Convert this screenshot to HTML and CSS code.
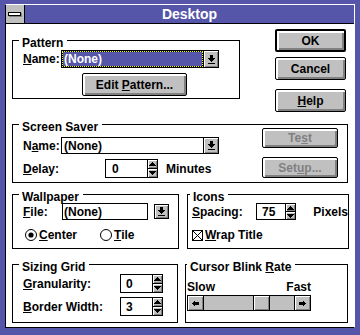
FILE: index.html
```html
<!DOCTYPE html>
<html lang="en">
<head>
  <meta charset="UTF-8">
  <title>Desktop</title>
  <meta name="viewport" content="width=device-width, initial-scale=1.0">
  <link rel="stylesheet" href="styles.css">
</head>
<body>
  <svg class="defs" width="0" height="0">
    <symbol id="drop" viewBox="0 0 7 9"><path d="M2 0h3v3H2zM0 3h7v1H0zM1 4h5v1H1zM2 5h3v1H2zM3 6h1v1H3zM0 8h7v1H0z"/></symbol>
    <symbol id="up" viewBox="0 0 7 4"><path d="M3 0h1v1H3zM2 1h3v1H2zM1 2h5v1H1zM0 3h7v1H0z"/></symbol>
    <symbol id="down" viewBox="0 0 7 4"><path d="M0 0h7v1H0zM1 1h5v1H1zM2 2h3v1H2zM3 3h1v1H3z"/></symbol>
    <symbol id="left" viewBox="0 0 7 7"><path d="M0 3h1v1H0zM1 2h1v3H1zM2 1h1v5H2zM3 2h4v3H3z"/></symbol>
    <symbol id="right" viewBox="0 0 7 7"><path d="M6 3h1v1H6zM5 2h1v3H5zM4 1h1v5H4zM0 2h4v3H0z"/></symbol>
  </svg>

  <div class="window">
    <div class="titlebar">
      <div class="sysmenu"><span class="sysbar"></span></div>
      <div class="caption">Desktop</div>
    </div>

    <div class="dialog">
      <div class="row">
        <div class="group pattern">
          <div class="legend">Pattern</div>
          <div class="line first">
            <span class="label name"><u>N</u>ame:</span>
            <div class="combo focus">
              <div class="field"><span class="sel">(None)</span></div>
              <div class="dropbtn"><svg width="7" height="9"><use href="#drop"/></svg></div>
            </div>
          </div>
          <div class="btn edit"><span>Edit <u>P</u>attern...</span></div>
        </div>

        <div class="buttons">
          <div class="btn default"><span>OK</span></div>
          <div class="btn cancel"><span>Cancel</span></div>
          <div class="btn help"><span><u>H</u>elp</span></div>
        </div>
      </div>

      <div class="group saver">
        <div class="legend">Screen Saver</div>
        <div class="row">
          <div class="saver-left">
            <div class="line">
              <span class="label name">N<u>a</u>me:</span>
              <div class="combo">
                <div class="field">(None)</div>
                <div class="dropbtn"><svg width="7" height="9"><use href="#drop"/></svg></div>
              </div>
            </div>
            <div class="line delay">
              <span class="label delay-label"><u>D</u>elay:</span>
              <div class="spin delay-spin">
                <div class="value">0</div>
                <div class="arrows">
                  <span><svg width="7" height="4"><use href="#up"/></svg></span>
                  <span><svg width="7" height="4"><use href="#down"/></svg></span>
                </div>
              </div>
              <span class="unit minutes">Minutes</span>
            </div>
          </div>
          <div class="saver-right">
            <div class="btn off test"><span>Te<u>s</u>t</span></div>
            <div class="btn off setup"><span>Set<u>u</u>p...</span></div>
          </div>
        </div>
      </div>

      <div class="row middle">
        <div class="group wallpaper">
          <div class="legend">Wallpaper</div>
          <div class="line first">
            <span class="label file"><u>F</u>ile:</span>
            <div class="box">(None)</div>
            <div class="dropbtn alone"><svg width="7" height="9"><use href="#drop"/></svg></div>
          </div>
          <div class="line radios">
            <div class="radio on">
              <svg width="12" height="12" viewBox="0 0 12 12"><circle cx="6" cy="6" r="5.5" fill="#fff" stroke="#000"/><circle cx="6" cy="6" r="2.6"/></svg>
              <span><u>C</u>enter</span>
            </div>
            <div class="radio">
              <svg width="12" height="12" viewBox="0 0 12 12"><circle cx="6" cy="6" r="5.5" fill="#fff" stroke="#000"/></svg>
              <span><u>T</u>ile</span>
            </div>
          </div>
        </div>

        <div class="group icons">
          <div class="legend">Icons</div>
          <div class="line first">
            <span class="label spacing"><u>S</u>pacing:</span>
            <div class="spin spacing-spin">
              <div class="value">75</div>
              <div class="arrows">
                <span><svg width="7" height="4"><use href="#up"/></svg></span>
                <span><svg width="7" height="4"><use href="#down"/></svg></span>
              </div>
            </div>
            <span class="unit pixels">Pixels</span>
          </div>
          <div class="line check">
            <svg width="11" height="11" viewBox="0 0 11 11"><rect x=".5" y=".5" width="10" height="10" fill="#fff" stroke="#000"/><path d="M1 1l9 9M10 1l-9 9" stroke="#000"/></svg>
            <span><u>W</u>rap Title</span>
          </div>
        </div>
      </div>

      <div class="row bottom">
        <div class="group sizing">
          <div class="legend">Sizing Grid</div>
          <div class="line first">
            <span class="label grid"><u>G</u>ranularity:</span>
            <div class="spin grid-spin">
              <div class="value">0</div>
              <div class="arrows">
                <span><svg width="7" height="4"><use href="#up"/></svg></span>
                <span><svg width="7" height="4"><use href="#down"/></svg></span>
              </div>
            </div>
          </div>
          <div class="line border-row">
            <span class="label grid"><u>B</u>order Width:</span>
            <div class="spin grid-spin">
              <div class="value">3</div>
              <div class="arrows">
                <span><svg width="7" height="4"><use href="#up"/></svg></span>
                <span><svg width="7" height="4"><use href="#down"/></svg></span>
              </div>
            </div>
          </div>
        </div>

        <div class="group cursor">
          <div class="legend">Cursor Blink <u>R</u>ate</div>
          <div class="scale"><span>Slow</span><span>Fast</span></div>
          <div class="scroll">
            <div class="arrow left"><svg width="7" height="7"><use href="#left"/></svg></div>
            <div class="track"><div class="thumb"></div></div>
            <div class="arrow right"><svg width="7" height="7"><use href="#right"/></svg></div>
          </div>
        </div>
      </div>
    </div>
  </div>
</body>
</html>
```

FILE: styles.css
```css
body {
  margin: 0;
  background: #5555aa;
  color: #000;
  font: bold 12px "Liberation Sans", Arial, sans-serif;
}
u {
  text-underline-offset: 1px;
}
.defs {
  display: block;
}
.window {
  width: 348px;
  height: 322px;
  margin: 4px 0 0 5px;
  background: #fff;
  border: 1px solid #fff;
  border-left-color: #000;
  border-bottom-color: #000;
}
.titlebar {
  display: flex;
  height: 18px;
  background: #5555aa;
  border-bottom: 1px solid #000;
}
.sysmenu {
  width: 18px;
  background: #c0c0c0;
  border-right: 1px solid #000;
}
.sysbar {
  display: block;
  width: 11px;
  height: 2px;
  margin: 7px 0 0 2px;
  background: #fff;
  border: 1px solid #000;
  box-shadow: 1px 1px 0 #808080;
}
.caption {
  flex: 1;
  color: #fff;
  font-size: 14px;
  line-height: 18px;
  text-align: center;
}
.dialog {
  height: 303px;
  padding: 5px 0 0 6px;
  box-sizing: border-box;
}
.row {
  display: flex;
  align-items: flex-start;
}
.line {
  display: flex;
  align-items: center;
}

/* group boxes */
.group {
  border: 1px solid #000;
  box-sizing: border-box;
  padding-left: 10px;
}
.legend {
  width: fit-content;
  height: 14px;
  line-height: 14px;
  margin: -5px 0 -9px -4px;
  padding: 0 4px 0 3px;
  background: #fff;
}
.pattern {
  width: 228px;
  height: 59px;
  margin-top: 11px;
}
.pattern .line.first {
  margin-top: 9px;
}
.saver {
  width: 336px;
  height: 59px;
  margin-top: 12px;
}
.saver-left {
  padding-top: 12px;
}
.saver-right {
  margin-left: 43px;
  padding-top: 3px;
}
.middle {
  margin-top: 11px;
}
.wallpaper {
  width: 167px;
  height: 55px;
}
.wallpaper .line.first,
.icons .line.first {
  margin-top: 8px;
}
.icons {
  width: 162px;
  height: 55px;
  margin-left: 8px;
  padding-left: 4px;
}
.icons .legend {
  margin-left: -2px;
}
.bottom {
  margin-top: 15px;
}
.sizing {
  width: 166px;
  height: 59px;
}
.sizing .line.first {
  margin-top: 9px;
}
.cursor {
  width: 163px;
  height: 59px;
  margin-left: 7px;
  padding-left: 1px;
}
.cursor .legend {
  margin-left: 0;
}

/* labels */
.label.name { width: 38px; }
.label.delay-label { width: 82px; }
.label.file { width: 39px; }
.label.spacing { width: 67px; }
.label.grid { width: 97px; }
.line.delay { margin-top: 5px; }
.line.border-row { margin-top: 4px; }
.unit.minutes { margin-left: 8px; }
.unit.pixels { margin-left: 17px; }

/* push buttons */
.btn {
  display: flex;
  align-items: center;
  justify-content: center;
  box-sizing: border-box;
  background: #c0c0c0;
  border: 1px solid #000;
  border-radius: 2px;
  box-shadow: inset 2px 2px #fff, inset -2px -2px #808080;
}
.btn.default {
  border-width: 2px;
}
.btn.off {
  color: #808080;
}
.buttons {
  width: 71px;
  margin-left: 35px;
}
.buttons .btn {
  height: 23px;
}
.btn.cancel { margin-top: 5px; }
.btn.help { margin-top: 9px; }
.btn.edit {
  width: 105px;
  height: 23px;
  margin: 5px 0 0 59px;
}
.btn.test,
.btn.setup {
  width: 76px;
}
.btn.test { height: 20px; }
.btn.setup {
  height: 21px;
  margin-top: 9px;
}

/* drop down combos */
.combo {
  display: flex;
  width: 158px;
  height: 18px;
  border: 1px solid #000;
  box-sizing: border-box;
}
.saver .combo {
  height: 17px;
}
.combo .field {
  flex: 1;
  display: flex;
  align-items: center;
  padding-left: 2px;
}
.combo.focus .field {
  padding: 0;
  align-items: stretch;
}
.sel {
  flex: 1;
  display: flex;
  align-items: center;
  padding-left: 1px;
  color: #fff;
  border: 1px dotted #ffff00;
  background: linear-gradient(#5555aa, #5555aa) padding-box, #000;
}
.dropbtn {
  display: flex;
  align-items: center;
  justify-content: center;
  width: 14px;
  background: #c0c0c0;
  border-left: 1px solid #000;
  box-shadow: inset 1px 1px #fff, inset -1px -1px #808080;
}
.dropbtn.alone {
  width: 15px;
  height: 15px;
  margin-left: 6px;
  border: 1px solid #000;
  box-sizing: border-box;
}
.box {
  display: flex;
  align-items: center;
  width: 86px;
  height: 17px;
  padding-left: 1px;
  border: 1px solid #000;
  box-sizing: border-box;
}

/* spin controls */
.spin {
  display: flex;
  border: 1px solid #000;
  box-sizing: border-box;
}
.spin .value {
  flex: 1;
  display: flex;
  align-items: center;
  padding-left: 6px;
}
.arrows {
  display: flex;
  flex-direction: column;
  width: 9px;
  border-left: 1px solid #000;
}
.arrows span {
  flex: 1;
  display: flex;
  align-items: center;
  justify-content: center;
  background: #c0c0c0;
  box-shadow: inset 1px 1px #fff, inset -1px -1px #808080;
}
.arrows span + span {
  border-top: 1px solid #000;
}
.delay-spin {
  width: 53px;
  height: 19px;
}
.spacing-spin {
  width: 42px;
  height: 17px;
}
.spacing-spin .value {
  padding-left: 5px;
}
.grid-spin {
  width: 43px;
  height: 19px;
}
.grid-spin .value {
  padding-left: 5px;
}

/* radio and check */
.line.radios {
  margin-top: 8px;
}
.radio {
  display: flex;
  align-items: center;
  gap: 2px;
}
.radio.on {
  width: 75px;
  margin-left: 2px;
}
.line.check {
  margin-top: 8px;
  gap: 2px;
}

/* slider */
.scale {
  display: flex;
  justify-content: space-between;
  width: 124px;
  line-height: 14px;
  margin-top: 15px;
}
.scroll {
  display: flex;
  width: 124px;
  height: 16px;
  margin-top: 1px;
  border: 1px solid #000;
  box-sizing: border-box;
  background: #c0c0c0;
}
.scroll .arrow {
  display: flex;
  align-items: center;
  justify-content: center;
  width: 15px;
  box-shadow: inset 1px 1px #fff, inset -1px -1px #808080;
}
.scroll .arrow.left {
  border-right: 1px solid #000;
}
.scroll .arrow.right {
  border-left: 1px solid #000;
}
.track {
  flex: 1;
  display: flex;
}
.thumb {
  width: 15px;
  margin-left: 49px;
  border-left: 1px solid #000;
  border-right: 1px solid #000;
  box-shadow: inset 1px 1px #fff, inset -1px -1px #808080;
}
```
